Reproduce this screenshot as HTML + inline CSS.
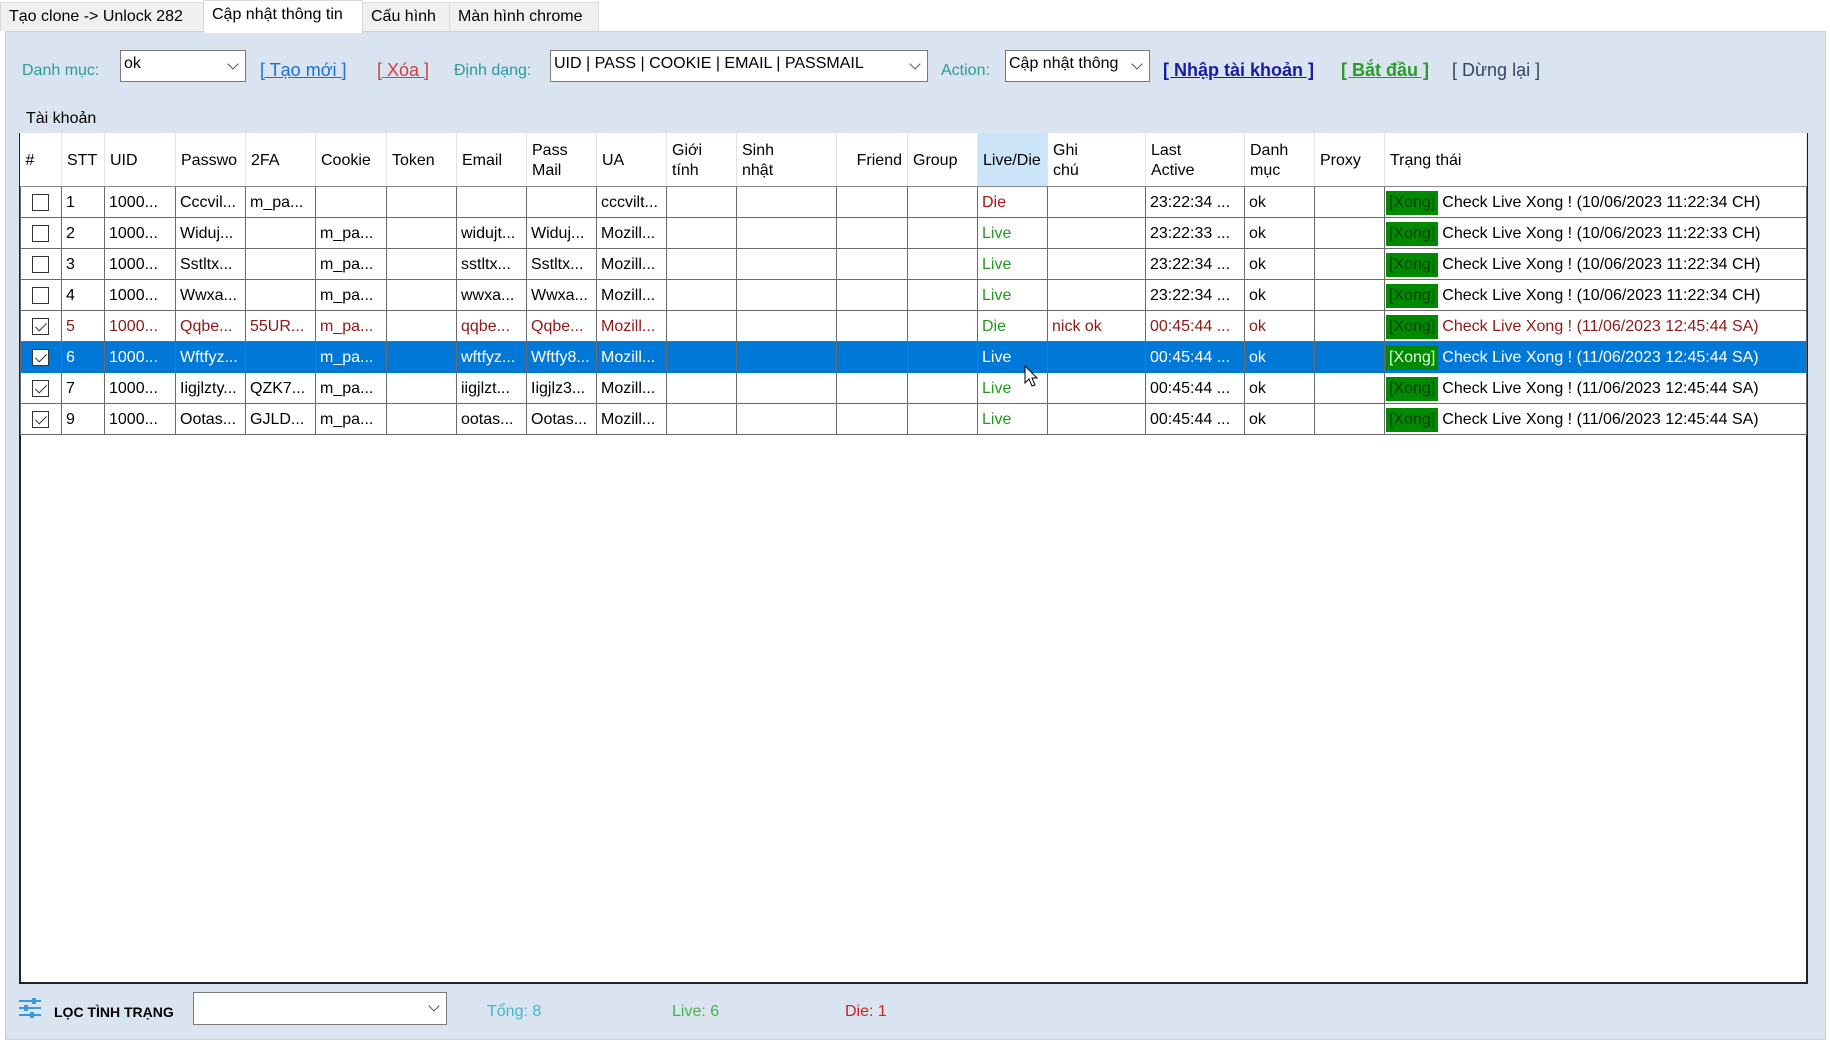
<!DOCTYPE html>
<html><head><meta charset="utf-8"><style>
*{box-sizing:border-box;margin:0;padding:0}
body{width:1830px;height:1042px;background:#fff;font-family:"Liberation Sans",Arial,sans-serif;font-size:16px;color:#000;position:relative;overflow:hidden}
.a{position:absolute;white-space:nowrap}
.tab{position:absolute;top:2px;height:29px;background:#f0f0f0;border:1px solid #d9d9d9;border-bottom:none;padding:5px 0 0 8px;font-size:16px}
.panel{position:absolute;left:5px;top:31px;width:1821px;height:1009px;background:#d9e4f0;border:1px solid #c8d3de}
.combo{position:absolute;background:#fff;border:1px solid #7a7a7a;padding:4px 3px;font-size:16px}
.combo:after{content:"";position:absolute;right:8px;top:9px;width:7px;height:7px;border-right:1px solid #555;border-bottom:1px solid #555;transform:rotate(45deg)}
table{position:absolute;left:20px;top:133px;border-collapse:collapse;table-layout:fixed;background:#fff}
.tbl{position:absolute;left:19px;top:133px;width:1789px;height:851px;background:#fff;border:2px solid #222}
th{height:53px;padding-top:3px;font-weight:normal;text-align:left;padding-left:5px;padding-right:5px;border-right:1px solid #e4e4e4;border-bottom:1px solid #888;font-size:16px;line-height:20px;overflow:hidden;white-space:nowrap}
td{height:31px;padding-top:2px;border:1px solid #6a6a6a;padding-left:4px;padding-right:4px;overflow:hidden;white-space:nowrap;font-size:16px}
.cb{display:inline-block;width:17px;height:17px;border:1px solid #333;background:#fff;vertical-align:middle;position:relative;margin-left:7px}
.ck:after{content:"";position:absolute;left:5px;top:1px;width:5px;height:10px;border-right:1.5px solid #333;border-bottom:1.5px solid #333;transform:rotate(45deg)}
.x{display:inline-block;background:#008a00;color:#0a3d0a;padding:3px 3px;margin-left:-3px;margin-right:4px}
.r td{color:#8b1a1a}
.s td{background:#0078d7;color:#fff;border-color:#0078d7 #6a6a6a}
.s .x{color:#e0ffe0}
.g{color:#229a22!important}
.d{color:#b01010}
.lk{font-size:18px;top:60px}
</style></head><body>
<div class="tab" style="left:0;width:204px">Tạo clone -&gt; Unlock 282</div>
<div class="tab" style="left:203px;width:160px;background:#fff;top:0;height:33px;z-index:2">Cập nhật thông tin</div>
<div class="tab" style="left:362px;width:88px">Cấu hình</div>
<div class="tab" style="left:449px;width:150px">Màn hình chrome</div>
<div class="panel"></div>
<div class="a" style="left:22px;top:62px;color:#2a9a9a">Danh mục:</div>
<div class="combo" style="left:120px;top:50px;width:126px;height:32px">ok</div>
<div class="a lk" style="left:260px;color:#1e6fd0;text-decoration:underline">[ Tạo mới ]</div>
<div class="a lk" style="left:377px;color:#d04040;text-decoration:underline">[ Xóa ]</div>
<div class="a" style="left:454px;top:62px;color:#2a9a9a">Định dạng:</div>
<div class="combo" style="left:550px;top:50px;width:378px;height:32px">UID | PASS | COOKIE | EMAIL | PASSMAIL</div>
<div class="a" style="left:941px;top:62px;color:#2a9a9a">Action:</div>
<div class="combo" style="left:1005px;top:50px;width:145px;height:32px;overflow:hidden">Cập nhật thông</div>
<div class="a lk" style="left:1163px;color:#1a1aa0;text-decoration:underline;font-weight:bold">[ Nhập tài khoản ]</div>
<div class="a lk" style="left:1341px;color:#2a9a2a;text-decoration:underline;font-weight:bold">[ Bắt đầu ]</div>
<div class="a lk" style="left:1452px;color:#334466">[ Dừng lại ]</div>
<div class="a" style="left:26px;top:110px">Tài khoản</div>
<div class="tbl"></div>
<table>
<colgroup><col width="41"><col width="43"><col width="71"><col width="70"><col width="70"><col width="71"><col width="70"><col width="70"><col width="70"><col width="70"><col width="70"><col width="100"><col width="71"><col width="70"><col width="70"><col width="98"><col width="99"><col width="70"><col width="70"><col width="422"></colgroup>
<tr><th>#</th><th>STT</th><th>UID</th><th>Passwo</th><th>2FA</th><th>Cookie</th><th>Token</th><th>Email</th><th>Pass<br>Mail</th><th>UA</th><th>Giới<br>tính</th><th>Sinh<br>nhật</th><th style="text-align:right">Friend</th><th>Group</th><th style="background:#cce4f7">Live/Die</th><th>Ghi<br>chú</th><th>Last<br>Active</th><th>Danh<br>mục</th><th>Proxy</th><th>Trạng thái</th></tr>
<tr><td><span class="cb"></span></td><td>1</td><td>1000...</td><td>Cccvil...</td><td>m_pa...</td><td></td><td></td><td></td><td></td><td>cccvilt...</td><td></td><td></td><td></td><td></td><td class="d">Die</td><td></td><td>23:22:34 ...</td><td>ok</td><td></td><td><span class="x">[Xong]</span>Check Live Xong ! (10/06/2023 11:22:34 CH)</td></tr>
<tr><td><span class="cb"></span></td><td>2</td><td>1000...</td><td>Widuj...</td><td></td><td>m_pa...</td><td></td><td>widujt...</td><td>Widuj...</td><td>Mozill...</td><td></td><td></td><td></td><td></td><td class="g">Live</td><td></td><td>23:22:33 ...</td><td>ok</td><td></td><td><span class="x">[Xong]</span>Check Live Xong ! (10/06/2023 11:22:33 CH)</td></tr>
<tr><td><span class="cb"></span></td><td>3</td><td>1000...</td><td>Sstltx...</td><td></td><td>m_pa...</td><td></td><td>sstltx...</td><td>Sstltx...</td><td>Mozill...</td><td></td><td></td><td></td><td></td><td class="g">Live</td><td></td><td>23:22:34 ...</td><td>ok</td><td></td><td><span class="x">[Xong]</span>Check Live Xong ! (10/06/2023 11:22:34 CH)</td></tr>
<tr><td><span class="cb"></span></td><td>4</td><td>1000...</td><td>Wwxa...</td><td></td><td>m_pa...</td><td></td><td>wwxa...</td><td>Wwxa...</td><td>Mozill...</td><td></td><td></td><td></td><td></td><td class="g">Live</td><td></td><td>23:22:34 ...</td><td>ok</td><td></td><td><span class="x">[Xong]</span>Check Live Xong ! (10/06/2023 11:22:34 CH)</td></tr>
<tr class="r"><td><span class="cb ck"></span></td><td>5</td><td>1000...</td><td>Qqbe...</td><td>55UR...</td><td>m_pa...</td><td></td><td>qqbe...</td><td>Qqbe...</td><td>Mozill...</td><td></td><td></td><td></td><td></td><td class="g">Die</td><td>nick ok</td><td>00:45:44 ...</td><td>ok</td><td></td><td><span class="x">[Xong]</span>Check Live Xong ! (11/06/2023 12:45:44 SA)</td></tr>
<tr class="s"><td><span class="cb ck"></span></td><td>6</td><td>1000...</td><td>Wftfyz...</td><td></td><td>m_pa...</td><td></td><td>wftfyz...</td><td>Wftfy8...</td><td>Mozill...</td><td></td><td></td><td></td><td></td><td>Live</td><td></td><td>00:45:44 ...</td><td>ok</td><td></td><td><span class="x">[Xong]</span>Check Live Xong ! (11/06/2023 12:45:44 SA)</td></tr>
<tr><td><span class="cb ck"></span></td><td>7</td><td>1000...</td><td>Iigjlzty...</td><td>QZK7...</td><td>m_pa...</td><td></td><td>iigjlzt...</td><td>Iigjlz3...</td><td>Mozill...</td><td></td><td></td><td></td><td></td><td class="g">Live</td><td></td><td>00:45:44 ...</td><td>ok</td><td></td><td><span class="x">[Xong]</span>Check Live Xong ! (11/06/2023 12:45:44 SA)</td></tr>
<tr><td><span class="cb ck"></span></td><td>9</td><td>1000...</td><td>Ootas...</td><td>GJLD...</td><td>m_pa...</td><td></td><td>ootas...</td><td>Ootas...</td><td>Mozill...</td><td></td><td></td><td></td><td></td><td class="g">Live</td><td></td><td>00:45:44 ...</td><td>ok</td><td></td><td><span class="x">[Xong]</span>Check Live Xong ! (11/06/2023 12:45:44 SA)</td></tr>
</table>
<svg class="a" style="left:1024px;top:365px" width="16" height="24" viewBox="0 0 16 24"><path d="M1 1 L1 18 L5 14 L8 21 L11 20 L8 13 L13 13 Z" fill="#fff" stroke="#000" stroke-width="1"/></svg>
<svg class="a" style="left:18px;top:996px" width="24" height="24" viewBox="0 0 24 24"><g stroke="#3a9ad8" stroke-width="2"><line x1="1" y1="5" x2="23" y2="5"/><line x1="1" y1="12" x2="23" y2="12"/><line x1="1" y1="19" x2="23" y2="19"/></g><g fill="#3a9ad8"><rect x="14" y="2" width="4" height="6"/><rect x="6" y="9" width="4" height="6"/><rect x="12" y="16" width="4" height="6"/></g></svg>
<div class="a" style="left:54px;top:1004px;font-weight:bold;font-size:14px">LỌC TÌNH TRẠNG</div>
<div class="combo" style="left:193px;top:992px;width:254px;height:33px"></div>
<div class="a" style="left:487px;top:1003px;color:#40b8c8">Tổng: 8</div>
<div class="a" style="left:672px;top:1003px;color:#40b840">Live: 6</div>
<div class="a" style="left:845px;top:1003px;color:#d02020">Die: 1</div>
</body></html>
